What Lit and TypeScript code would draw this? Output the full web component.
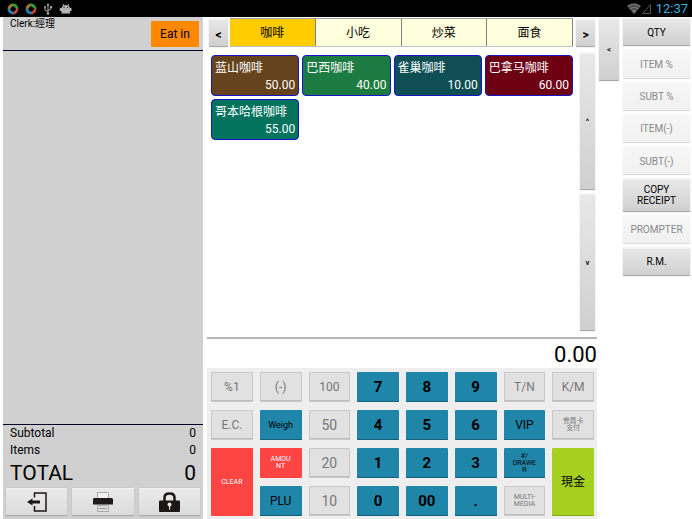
import { LitElement, html, css, svg } from "lit";
import { customElement, state } from "lit/decorators.js";
import { classMap } from "lit/directives/class-map.js";
import { styleMap } from "lit/directives/style-map.js";

interface Key {
  label: string;
  kind: string;
  size: string;
  tall?: boolean;
}

const k = (label: string, kind = "plain", size = "m", tall = false): Key => ({ label, kind, size, tall });

const KEYS: Key[] = [
  k("%1"), k("(-)"), k("100"), k("7", "blue", "digit"), k("8", "blue", "digit"), k("9", "blue", "digit"), k("T/N"), k("K/M"),
  k("E.C."), k("Weigh", "blue", "s"), k("50", "plain", "l"), k("4", "blue", "digit"), k("5", "blue", "digit"), k("6", "blue", "digit"), k("VIP", "blue", "m"), k("會員卡\n支付", "plain", "xs"),
  k("CLEAR", "red", "xs", true), k("AMOU\nNT", "red", "xs"), k("20", "plain", "l"), k("1", "blue", "digit"), k("2", "blue", "digit"), k("3", "blue", "digit"), k("#/\nDRAWE\nR", "blue", "xs"), k("現金", "green", "m", true),
  k("PLU", "blue", "m"), k("10", "plain", "l"), k("0", "blue", "digit"), k("00", "blue", "digit"), k(".", "blue", "digit"), k("MULTI-\nMEDIA", "plain", "xs"),
];

const PRODUCTS = [
  { name: "蓝山咖啡", price: "50.00", color: "#65431c" },
  { name: "巴西咖啡", price: "40.00", color: "#1c7b40" },
  { name: "雀巢咖啡", price: "10.00", color: "#0e4f54" },
  { name: "巴拿马咖啡", price: "60.00", color: "#6e0014" },
  { name: "哥本哈根咖啡", price: "55.00", color: "#03735e" },
];

const FUNCTIONS = [
  { label: "QTY", off: false },
  { label: "ITEM %", off: true },
  { label: "SUBT %", off: true },
  { label: "ITEM(-)", off: true },
  { label: "SUBT(-)", off: true },
  { label: "COPY\nRECEIPT", off: false },
  { label: "PROMPTER", off: true },
  { label: "R.M.", off: false },
];

const swirl = svg`
  <path d="M.500 6.500Q.500 2 5 .500L7 3Q4 3 3.200 6.800Z" fill="#a8752a"/>
  <path d="M5 .500Q9.500 0 11.300 4.500L9.500 7Q8.500 3.500 5.500 3Z" fill="#2f9e3c"/>
  <path d="M11.500 5Q11.500 9.500 7.500 11.500L5.500 9Q8.500 8.500 9.300 5.500Z" fill="#c8452c"/>
  <path d="M7 11.500Q2.500 11.500 .500 7.500L2.500 4.500Q3.500 8.500 6.500 9Z" fill="#2c7fb4"/>`;

@customElement("app-root")
export class AppRoot extends LitElement {
  @state() private tab = "咖啡";

  static styles = css`
    :host {
      display: flex;
      flex-direction: column;
      min-height: 100vh;
      background: #fff;
      color: #000;
      font-family: Roboto, "Noto Sans CJK SC", sans-serif;
      font-size: 12px;
      line-height: 14px;
    }
    * { box-sizing: border-box; }
    button {
      font: inherit;
      color: inherit;
      margin: 0;
      padding: 0;
      border: 0;
      white-space: pre-line;
    }
    svg { display: block; }
    .status {
      display: flex;
      align-items: center;
      justify-content: space-between;
      height: 17px;
      padding: 0 4px 0 7px;
      background: #000;
    }
    .group { display: flex; align-items: center; gap: 6px; }
    .group.right { gap: 1px; }
    .clock { margin-left: 4px; color: #33b5e5; font-size: 13px; line-height: 17px; }
    .main {
      flex: 1;
      display: grid;
      grid-template-columns: 202fr 390fr 20fr 69fr;
      column-gap: 2px;
      padding: 0 2px 0 3px;
    }
    .order {
      display: flex;
      flex-direction: column;
      margin-right: 2px;
      background: #d0d0d0;
    }
    .head {
      display: flex;
      justify-content: space-between;
      align-items: flex-start;
      height: 34px;
      padding: 0 4px 0 7px;
      border-bottom: 1px solid #000028;
      font-size: 10px;
    }
    .eat {
      width: 48px;
      height: 26px;
      margin-top: 4px;
      border-radius: 1px;
      background: #ff8800;
      font-size: 12px;
    }
    .lines { flex: 1; }
    .totals { margin: 0; border-top: 1px solid #000028; padding: 0 7px; }
    .row { display: flex; justify-content: space-between; line-height: 17px; }
    .row.total { font-size: 21px; line-height: 28px; }
    dt, dd { margin: 0; }
    .actions { display: grid; grid-template-columns: repeat(3, 1fr); gap: 5px; padding: 1px 3px 3px; }
    .actions button { height: 28px; display: grid; place-items: center; }
    .raised {
      background: linear-gradient(#e8e8e8, #cfcfcf);
      border-radius: 1px;
      box-shadow: inset 0 1px #f2f2f2, inset 0 -1px #a8a8a8, 0 0 1px #909090;
    }
    .actions .raised { background: linear-gradient(#eaeaea, #dcdcdc); }
    .sale { display: flex; flex-direction: column; min-width: 0; }
    .tabs { display: flex; gap: 2px; padding: 1px 2px 0; height: 31px; }
    .page { width: 19px; height: 28px; margin-top: 1px; padding-top: 3px; font-size: 12px; font-weight: 700; }
    .strip {
      flex: 1;
      display: grid;
      grid-template-columns: repeat(4, 1fr);
      height: 29px;
      margin-right: 1px;
      border-top: 1px solid #a0a0a0;
      border-bottom: 1px solid #c0c0c0;
    }
    .tab { background: #ffffdd; border-right: 1px solid #808080; font-size: 12px; }
    .tab.on { background: #ffcc00; }
    .catalog { flex: 1; display: flex; gap: 7px; padding: 5px 2px 6px 4px; border-bottom: 2px solid #b4b4b4; }
    .items {
      flex: 1;
      display: grid;
      grid-template-columns: repeat(4, 1fr);
      grid-auto-rows: 41px;
      align-content: start;
      gap: 3px;
      padding-top: 2px;
    }
    .item {
      display: flex;
      flex-direction: column;
      justify-content: space-between;
      padding: 5px 3px 3px;
      border: 1px solid #1414c8;
      border-radius: 4px;
      color: #fff;
      text-align: left;
    }
    .item .price { align-self: flex-end; }
    .scroll { width: 15px; display: grid; grid-template-rows: 1fr 1fr; gap: 4px; font-size: 8px; font-weight: 500; }
    .display { display: block; height: 29px; font-size: 22px; line-height: 31px; text-align: right; }
    .pad {
      display: grid;
      grid-template-columns: repeat(8, 1fr);
      grid-auto-rows: 30px;
      gap: 8px 7px;
      padding: 4px 3px 3px 4px;
      background: #eee;
    }
    .key { border-radius: 1px; font-size: 12px; box-shadow: inset 0 0 0 1px #c8c8c8, inset 0 -2px #bdbdbd; background: #e1e1e1; color: #777; }
    .key.blue { background: #2086a9; color: #000; box-shadow: inset 0 -1px #14617c; }
    .key.red { background: #ff4444; color: #fff; box-shadow: none; }
    .key.green { background: #a5d01f; color: #000; box-shadow: inset 0 -1px #86ab14; }
    .key.tall { grid-row: span 2; }
    .key.s { font-size: 9px; }
    .key.xs { font-size: 7px; line-height: 7px; }
    .key.l { font-size: 14px; }
    .key.digit { font-size: 15px; font-weight: 700; }
    .drawer { height: 63px; margin-top: 1px; font-size: 8px; font-weight: 500; }
    .side { display: flex; flex-direction: column; gap: 4px; height: 259px; padding: 1px 0 0 2px; }
    .side button { flex: 1 1 28px; font-size: 10px; line-height: 11px; }
    .side .double { flex: 1 1 32px; }
    .side .faded {
      background: linear-gradient(#f7f7f7, #f0f0f0);
      color: #888;
      box-shadow: inset 0 -1px #dcdcdc, 0 0 1px #ccc;
    }
  `;

  render() {
    return html`
      <header class="status">
        <div class="group">
          <svg width="12" height="12" viewBox="0 0 12 12" aria-hidden="true">${swirl}</svg>
          <svg width="12" height="12" viewBox="0 0 12 12" aria-hidden="true">${swirl}</svg>
          <svg width="10" height="12" viewBox="0 0 10 12" fill="none" stroke="#aaa" aria-hidden="true">
            <path d="M5 2V10M5 8.500L2 7V4.500M5 7.500L8 6V4"/>
            <path d="M5 0L6.500 2.500H3.500ZM7 3H9V5H7Z" fill="#aaa" stroke="none"/>
            <circle cx="2" cy="4" r="1" fill="#aaa" stroke="none"/>
            <circle cx="5" cy="10.500" r="1.300" fill="#aaa" stroke="none"/>
          </svg>
          <svg width="13" height="12" viewBox="0 0 13 12" aria-hidden="true">
            <path d="M2.500 5Q3 3 4.300 2.500L3.200 1H4.200L5.300 2.200H8.200L9.300 1H10.300L9.200 2.500Q10.500 3 11 5H12.500V8H11V10.500H2.500V8H.800V5Z" fill="#b4b4b4"/>
            <circle cx="5" cy="4.500" r="0.700" fill="#333"/><circle cx="8.500" cy="4.500" r="0.700" fill="#333"/>
          </svg>
        </div>
        <div class="group right">
          <svg width="14" height="11" viewBox="0 0 14 11" aria-hidden="true">
            <path d="M0 3Q7-2.500 14 3L7 11Z" fill="#6e6e6e"/>
            <path d="M1.500 4.800Q7 .800 12.500 4.800M3.500 7Q7 4.300 10.500 7" fill="none" stroke="#222" stroke-width=".8"/>
          </svg>
          <svg width="9" height="11" viewBox="0 0 9 11" aria-hidden="true">
            <path d="M.8 10.500L8.500 1.500V10.500Z" fill="none" stroke="#555"/>
          </svg>
          <time class="clock">12:37</time>
        </div>
      </header>

      <main class="main">
        <section class="order">
          <div class="head">
            <span>Clerk:經理</span>
            <button class="eat">Eat in</button>
          </div>
          <div class="lines"></div>
          <dl class="totals">
            <div class="row"><dt>Subtotal</dt><dd>0</dd></div>
            <div class="row"><dt>Items</dt><dd>0</dd></div>
            <div class="row total"><dt>TOTAL</dt><dd>0</dd></div>
          </dl>
          <div class="actions">
            <button class="raised" aria-label="Exit">
              <svg width="20" height="20" viewBox="0 0 20 20" fill="none" stroke="#1c1616" stroke-width="1.500">
                <path d="M7.500 5.500V1H19V19H7.500V14"/>
                <path d="M3 10H13" stroke-width="3"/>
                <path d="M0 10L5.500 6.500V13.500Z" fill="#1c1616" stroke="none"/>
              </svg>
            </button>
            <button class="raised" aria-label="Print">
              <svg width="20" height="20" viewBox="0 0 20 20">
                <path d="M4.500 .500H15.500V7H4.500Z" fill="#f0f0f0" stroke="#aaa"/>
                <path d="M1 6H19L20 7V12.500H0V7Z" fill="#1c1a1a"/>
                <path d="M4.500 13.500H15.500V19.500H4.500Z" fill="#dcdcdc" stroke="#aaa"/>
                <path d="M6 16.500H14" stroke="#999"/>
              </svg>
            </button>
            <button class="raised" aria-label="Lock">
              <svg width="21" height="20" viewBox="0 0 21 20">
                <path d="M5.500 10V5.500Q5.500 1.500 10.500 1.500T15.500 5.500V10" fill="none" stroke="#1c1616" stroke-width="2.500"/>
                <rect y="8.500" width="21" height="11.500" rx="1" fill="#1c1616"/>
                <circle cx="10.500" cy="12.500" r="2" fill="#e4e4e4"/>
                <path d="M10 13H11.200V17.500H10Z" fill="#e4e4e4"/>
              </svg>
            </button>
          </div>
        </section>

        <section class="sale">
          <nav class="tabs">
            <button class="page raised">&lt;</button>
            <div class="strip">
              ${["咖啡", "小吃", "炒菜", "面食"].map(
                (t) => html`<button class=${classMap({ tab: true, on: t === this.tab })} @click=${() => (this.tab = t)}>${t}</button>`
              )}
            </div>
            <button class="page raised">&gt;</button>
          </nav>
          <div class="catalog">
            <div class="items">
              ${PRODUCTS.map(
                (p) => html`<button class="item" style=${styleMap({ background: p.color })}><span>${p.name}</span><span class="price">${p.price}</span></button>`
              )}
            </div>
            <div class="scroll">
              <button class="raised">^</button>
              <button class="raised">v</button>
            </div>
          </div>
          <output class="display">0.00</output>
          <div class="pad">
            ${KEYS.map(
              (key) => html`<button class=${classMap({ key: true, [key.kind]: true, [key.size]: true, tall: !!key.tall })}>${key.label}</button>`
            )}
          </div>
        </section>

        <button class="drawer raised">&lt;</button>

        <aside class="side">
          ${FUNCTIONS.map(
            (f) => html`<button class=${classMap({ raised: true, faded: f.off, double: f.label.includes("\n") })} ?disabled=${f.off}>${f.label}</button>`
          )}
        </aside>
      </main>
    `;
  }
}
